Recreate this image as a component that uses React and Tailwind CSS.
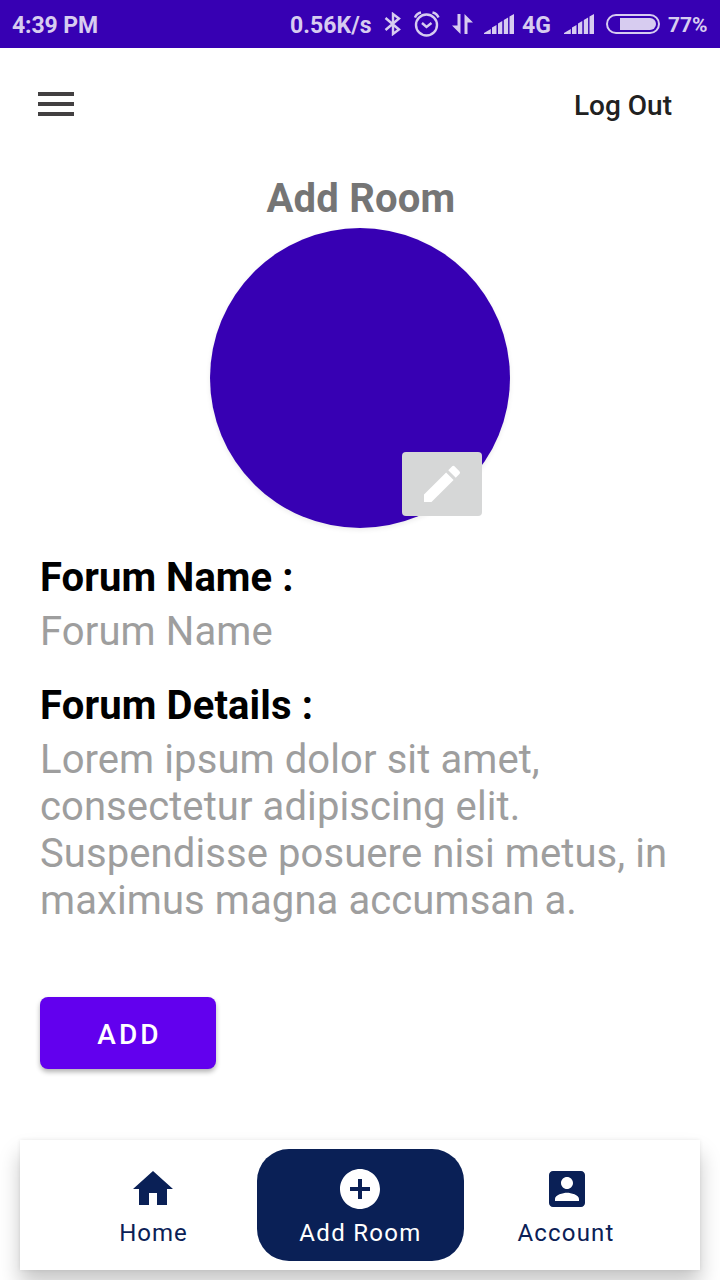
import React from "react";

function SignalIcon({ className }) {
  return (
    <svg className={className} width="30" height="20" viewBox="0 0 30 20" fill="currentColor">
      <path d="M0 20v-1L6.800 15V20zM8 13.500l4.500-2.500v9H8zM14 9.500l4.300-2.500v13H14zM19.800 6l4.300-2.500V20h-4.300zM25.500 2.500l4.500-2.500v20h-4.500z" />
    </svg>
  );
}

function StatusBar() {
  return (
    <header className="flex h-12 shrink-0 items-center bg-[#3700b3] pt-0.5 pl-3 font-bold text-[#d7ccf0]">
      <span className="w-[278px] text-[23px] leading-none tracking-[-0.1px] whitespace-nowrap">4:39 PM</span>
      <span className="w-[94px] text-[23px] leading-none tracking-[0.05px] whitespace-nowrap">0.56K/s</span>
      <svg className="-mt-0.5 h-6 w-[18px] shrink-0" viewBox="0 0 18 24" fill="none" stroke="currentColor" strokeWidth="2.400">
        <path d="M1.500 6L15 17.500L9 22V2L15 6.500L1.500 18" />
      </svg>
      <svg className="-mt-0.5 ml-3 h-[26px] w-[26px] shrink-0" viewBox="0 0 26 26" fill="none" stroke="currentColor" strokeWidth="2.400">
        <circle cx="12.500" cy="14" r="10.500" />
        <path d="M8 12l4.500 4 5-4M1 6.500Q2.500 2.500 7 1.500M18.500 1.500Q23 2.500 24.500 6.500" />
      </svg>
      <svg className="-mt-0.5 ml-3 h-5 w-[21px] shrink-0" viewBox="0 0 21 20" fill="currentColor">
        <path d="M5.500 0h3v20L0 11.500h5.500zM12.500 0L21 8.500h-5.500V20h-3z" />
      </svg>
      <SignalIcon className="-mt-0.5 ml-[11px] shrink-0" />
      <span className="ml-2 w-[42px] text-[23px] leading-none">4G</span>
      <SignalIcon className="-mt-0.5 shrink-0" />
      <svg className="-mt-0.5 ml-3 h-5 w-[54px] shrink-0" viewBox="0 0 54 20">
        <rect x="1" y="1" width="52" height="18" rx="9" fill="none" stroke="currentColor" strokeWidth="2" />
        <path d="M14 4h30a6 6 0 0 1 0 12H14z" fill="currentColor" />
      </svg>
      <span className="ml-2 text-[21px] leading-none">77%</span>
    </header>
  );
}

function NavItem({ label, path, active, labelClass }) {
  return (
    <button
      className={
        active
          ? "flex h-28 w-[207px] flex-col items-center rounded-[32px] bg-[#0a2056] pt-4 text-white"
          : "flex h-28 w-[207px] flex-col items-center pt-4 text-[#0a2056]"
      }
    >
      <svg width="48" height="48" viewBox="0 0 24 24" fill="currentColor">
        <path d={path} />
      </svg>
      <span className={`mt-1.5 text-2xl leading-7 whitespace-nowrap ${labelClass}`}>{label}</span>
    </button>
  );
}

export default function App() {
  return (
    <div className="flex h-[1280px] w-[720px] flex-col overflow-hidden bg-white font-['Roboto',sans-serif]">
      <StatusBar />

      <div className="flex h-28 shrink-0 items-center justify-between pr-12 pl-8">
        <button aria-label="Menu">
          <svg width="48" height="48" viewBox="0 0 24 24" fill="#424041">
            <path d="M3 18h18v-2H3v2zm0-5h18v-2H3v2zm0-7v2h18V6H3z" />
          </svg>
        </button>
        <button className="pt-1 text-[28px] leading-8 font-medium text-[#212121]">Log Out</button>
      </div>

      <main className="flex flex-1 flex-col px-10 pt-[15px]">
        <h1 className="pl-0.5 text-center text-[40px] leading-[47px] font-bold tracking-[0.2px] text-[#757575]">Add Room</h1>
        <div className="relative mt-1.5 size-[300px] self-center rounded-full bg-[#3700b3] shadow-[0_2px_5px_rgba(0,0,0,0.08)]">
          <button aria-label="Edit" className="absolute right-7 bottom-3 flex h-16 w-20 items-center justify-center rounded-[4px] bg-[#d6d7d7]">
            <svg width="48" height="48" viewBox="0 0 24 24" fill="white">
              <path d="M3 17.250V21h3.750L17.810 9.940l-3.750-3.750L3 17.250zM20.710 7.040a.996.996 0 0 0 0-1.410l-2.340-2.340a.996.996 0 0 0-1.410 0l-1.830 1.830 3.750 3.750 1.830-1.830z" />
            </svg>
          </button>
        </div>

        <h2 className="mt-[26px] text-[40px] leading-[47px] font-bold tracking-[0.06px] text-black">Forum Name :</h2>
        <p className="mt-[7px] text-[40px] leading-[47px] tracking-[0.12px] text-[#9e9e9e]">Forum Name</p>
        <h2 className="mt-[27px] text-[40px] leading-[47px] font-bold tracking-[0.13px] text-black">Forum Details :</h2>
        <p className="mt-[7px] text-[40px] leading-[47px] tracking-[0.09px] whitespace-nowrap text-[#9e9e9e]">
          Lorem ipsum dolor sit amet,
          <br />
          consectetur adipiscing elit.
          <br />
          Suspendisse posuere nisi metus, in
          <br />
          maximus magna accumsan a.
        </p>
        <button className="mt-[73px] h-[72px] w-44 rounded-lg bg-[#6200ee] pt-1 pl-[3px] text-[28px] leading-8 font-medium tracking-[3.2px] text-white shadow-[0_3px_5px_rgba(0,0,0,0.3)]">
          ADD
        </button>
      </main>

      <nav className="mx-5 mb-2.5 flex h-[130px] shrink-0 items-center justify-center bg-white shadow-[0_14px_20px_rgba(0,0,0,0.22),0_0_4px_rgba(0,0,0,0.08)]">
        <NavItem label="Home" labelClass="pl-px tracking-[1px]" path="M10 20v-6h4v6h5v-8h3L12 3 2 12h3v8z" />
        <NavItem
          active
          label="Add Room"
          labelClass="pl-px tracking-[1.3px]"
          path="M12 2C6.480 2 2 6.480 2 12s4.480 10 10 10 10-4.480 10-10S17.520 2 12 2zm5 11h-4v4h-2v-4H7v-2h4V7h2v4h4v2z"
        />
        <NavItem
          label="Account"
          labelClass="pr-0.5 tracking-[1.2px]"
          path="M3 5v14c0 1.100.890 2 2 2h14c1.100 0 2-.900 2-2V5c0-1.100-.900-2-2-2H5c-1.110 0-2 .900-2 2zm12 4c0 1.660-1.340 3-3 3s-3-1.340-3-3 1.340-3 3-3 3 1.340 3 3zm-9 8c0-2 4-3.100 6-3.100s6 1.100 6 3.100v1H6v-1z"
        />
      </nav>
    </div>
  );
}
